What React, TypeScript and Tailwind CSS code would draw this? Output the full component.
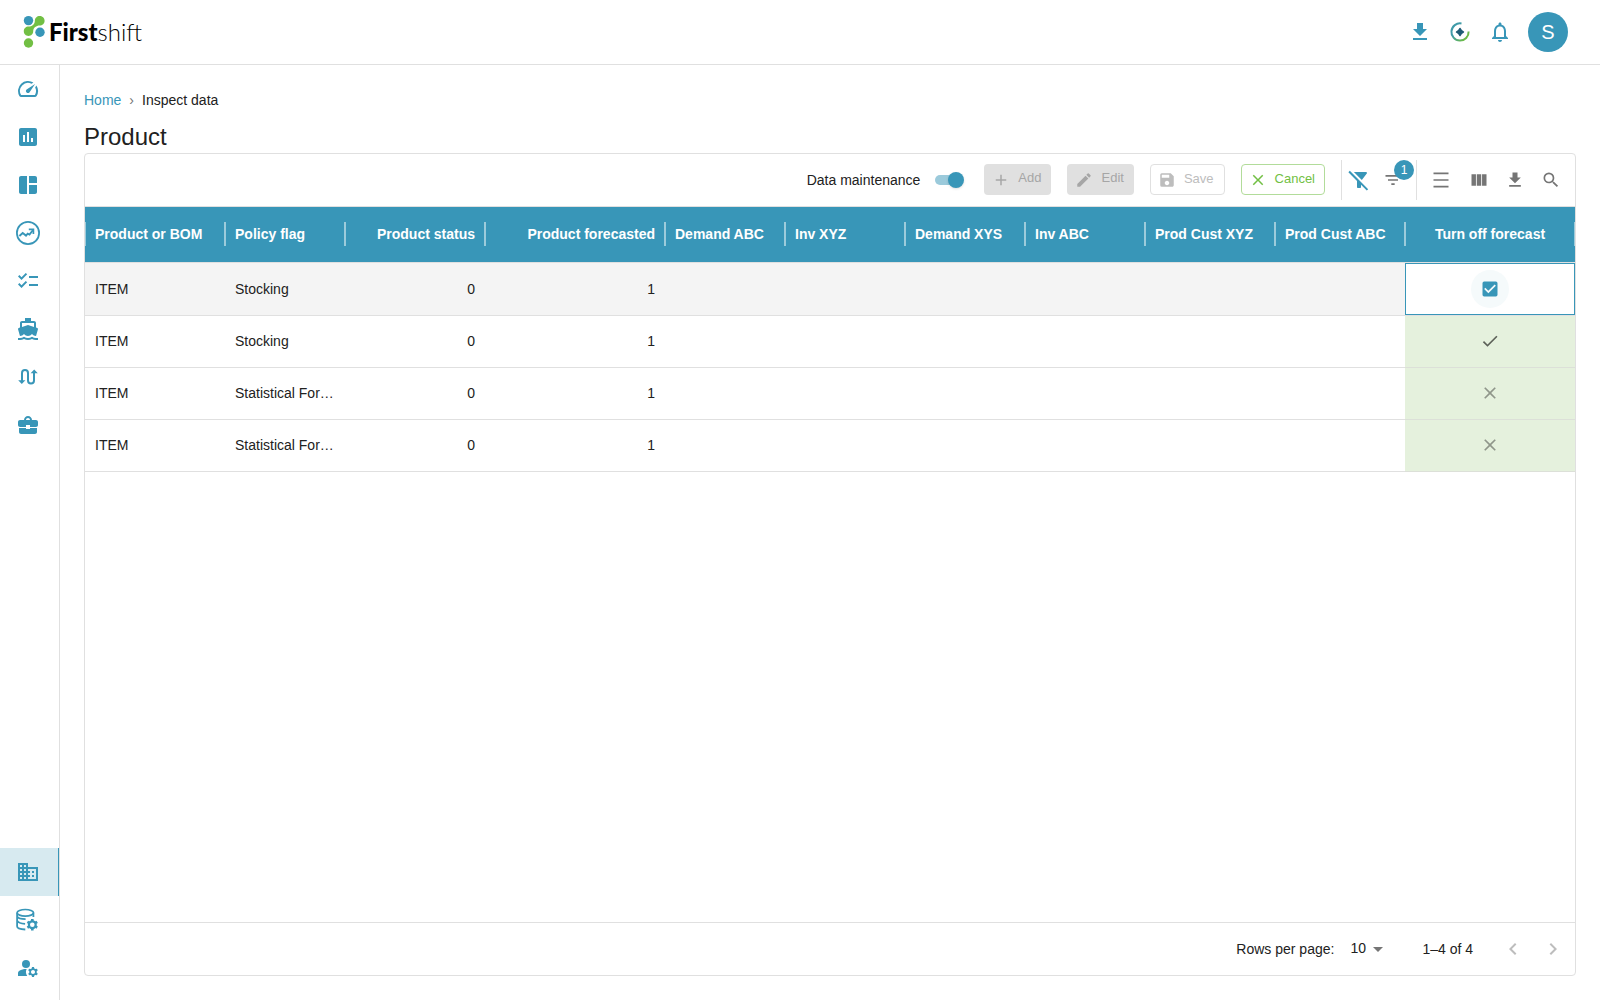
import React, { useState } from "react";
import {
  MdAdd,
  MdArrowDropDown,
  MdAssessment,
  MdCheck,
  MdCheckBox,
  MdCheckBoxOutlineBlank,
  MdChecklist,
  MdChevronLeft,
  MdChevronRight,
  MdClose,
  MdDensityMedium,
  MdDirectionsBoatFilled,
  MdDomain,
  MdEdit,
  MdFileDownload,
  MdFilterAltOff,
  MdFilterList,
  MdManageAccounts,
  MdNotificationsNone,
  MdSave,
  MdSearch,
  MdSpaceDashboard,
  MdSpeed,
  MdViewColumn,
} from "react-icons/md";

function LogoMark() {
  return (
    <svg width="22" height="34" viewBox="0 0 22 34" aria-hidden="true">
      <path
        d="M16.7 1C20 1 21.6 3.6 21.6 5.8c0 2.8-2.2 4.8-5 4.8-3.2 0-6.4 2.2-6.4 5.7 0 2.6-2 4.7-4.7 4.7S.8 18.900.8 16.300s2-4.700 4.700-4.700c3.500 0 6.300-2.400 6.300-5.600C11.800 3 14 1 16.700 1z"
        fill="#72bf44"
      />
      <circle cx="5.500" cy="5.600" r="4.700" fill="#3896b8" />
      <circle cx="17" cy="17.200" r="4.700" fill="#3896b8" />
      <circle cx="5.500" cy="28" r="4.700" fill="#72bf44" />
    </svg>
  );
}

function TrendIcon() {
  return (
    <svg width="24" height="24" viewBox="0 0 24 24" fill="none" stroke="currentColor" aria-hidden="true">
      <circle cx="12" cy="12" r="11.100" strokeWidth="1.800" />
      <path d="M3.400 15l3.300-3 3.300 2.600 1.700-2 1.800 1L17 9" strokeWidth="1.900" />
      <path d="M12.800 8.400h4.600v4.600" strokeWidth="1.700" />
    </svg>
  );
}

function RouteIcon() {
  return (
    <svg width="24" height="24" viewBox="0 0 24 24" fill="none" aria-hidden="true">
      <path d="M6 16V8a3 3 0 0 1 6 0v7.500a3 3 0 0 0 6 0V7" stroke="currentColor" strokeWidth="2" />
      <path d="M2.200 15.300h7.200L5.800 19zM14.600 8.300h7.200L18.200 4.500z" fill="currentColor" />
    </svg>
  );
}

function BriefcaseIcon() {
  return (
    <svg width="24" height="24" viewBox="0 0 24 24" fill="currentColor" aria-hidden="true">
      <path d="M10 16v-1H3v4c0 1.100.9 2 2 2h14c1.100 0 2-.9 2-2v-4h-7v1h-4z" />
      <path d="M20 7h-4c0-2.200-1.800-4-4-4S8 4.800 8 7H4c-1.100 0-2 .9-2 2v3c0 1.100.9 2 2 2h6v-2h4v2h6c1.100 0 2-.9 2-2V9c0-1.100-.9-2-2-2zM10 7c0-1.100.9-2 2-2s2 .9 2 2h-4z" />
    </svg>
  );
}

function DatabaseCogIcon() {
  return (
    <svg width="24" height="24" viewBox="0 0 24 24" fill="none" stroke="currentColor" aria-hidden="true">
      <ellipse cx="9.300" cy="4.800" rx="8.200" ry="3.300" strokeWidth="1.700" />
      <path
        d="M1.100 4.800v13.500c0 1.900 3.200 3 8.200 3.200M17.400 4.800v4.200M1.100 8.400c1 1.900 4 2.700 8.500 2.700M1.100 12.600c1 2 4 3 8 3.200"
        strokeWidth="1.800"
      />
      <circle cx="16.300" cy="16.700" r="3.400" strokeWidth="2.200" />
      <path
        d="M16.300 13.200v-2.200M16.300 20.200v2.200M19.300 14.950l1.900-1.100M13.300 18.450l-1.900 1.100M19.300 18.450l1.900 1.100M13.300 14.950l-1.900-1.100"
        strokeWidth="2.600"
      />
    </svg>
  );
}

function AssistantIcon() {
  return (
    <svg width="24" height="24" viewBox="0 0 24 24" fill="none" aria-hidden="true">
      <defs>
        <linearGradient id="ring" x1="3" y1="6" x2="20" y2="18" gradientUnits="userSpaceOnUse">
          <stop offset="0.300" stopColor="#3f9aa8" />
          <stop offset="0.900" stopColor="#6cbb47" />
        </linearGradient>
      </defs>
      <path d="M13.500 3.500A8.600 8.600 0 1 0 20.600 11.500" stroke="url(#ring)" strokeWidth="2" />
      <path
        d="M12 8.600c.8 2 1.400 2.600 3.400 3.400-2 .8-2.600 1.400-3.400 3.400-.8-2-1.400-2.600-3.400-3.400 2-.8 2.600-1.400 3.400-3.400z"
        fill="#1f5b75"
        stroke="#1f5b75"
        strokeWidth="1.600"
        strokeLinejoin="round"
      />
    </svg>
  );
}

const mainNav = [
  { label: "Dashboard", icon: <MdSpeed size={24} /> },
  { label: "Reports", icon: <MdAssessment size={24} /> },
  { label: "Workspace", icon: <MdSpaceDashboard size={24} /> },
  { label: "Forecast", icon: <TrendIcon /> },
  { label: "Tasks", icon: <MdChecklist size={24} /> },
  { label: "Supply", icon: <MdDirectionsBoatFilled size={24} /> },
  { label: "Flows", icon: <RouteIcon /> },
  { label: "Business", icon: <BriefcaseIcon /> },
];

const adminNav = [
  { label: "Inspect data", icon: <MdDomain size={24} />, active: true },
  { label: "Data settings", icon: <DatabaseCogIcon /> },
  { label: "User settings", icon: <MdManageAccounts size={24} /> },
];

function NavLink({ label, icon, active }: { label: string; icon: React.ReactNode; active?: boolean }) {
  return (
    <a
      href="#"
      aria-label={label}
      className={
        active
          ? "flex h-12 items-center border-r border-[#3896b8] bg-[#d7eaf0] pl-4 text-[#3896b8]"
          : "flex h-12 items-center pl-4 text-[#3896b8]"
      }
    >
      {icon}
    </a>
  );
}

const columns = [
  { name: "Product or BOM", col: "w-[140px]", align: "text-left" },
  { name: "Policy flag", col: "w-[120px]", align: "text-left" },
  { name: "Product status", col: "w-[140px]", align: "text-right" },
  { name: "Product forecasted", col: "w-[180px]", align: "text-right" },
  { name: "Demand ABC", col: "w-[120px]", align: "text-left" },
  { name: "Inv XYZ", col: "w-[120px]", align: "text-left" },
  { name: "Demand XYS", col: "w-[120px]", align: "text-left" },
  { name: "Inv ABC", col: "w-[120px]", align: "text-left" },
  { name: "Prod Cust XYZ", col: "w-[130px]", align: "text-left" },
  { name: "Prod Cust ABC", col: "w-[130px]", align: "text-left" },
  { name: "Turn off forecast", col: "w-[170px]", align: "text-center" },
];

const rows = [
  { cells: ["ITEM", "Stocking", "0", "1", "", "", "", "", "", ""], off: true, editing: true },
  { cells: ["ITEM", "Stocking", "0", "1", "", "", "", "", "", ""], off: true },
  { cells: ["ITEM", "Statistical For…", "0", "1", "", "", "", "", "", ""], off: false },
  { cells: ["ITEM", "Statistical For…", "0", "1", "", "", "", "", "", ""], off: false },
];

function EditCell() {
  const [checked, setChecked] = useState(true);
  return (
    <td className="border-b border-[#e0e0e0] bg-white p-0">
      <div className="flex h-[52px] items-center justify-center border border-[#3896b8]">
        <label className="flex size-[38px] cursor-pointer items-center justify-center rounded-full bg-[#f5fafb] text-[#3896b8]">
          <input
            type="checkbox"
            aria-label="Turn off forecast"
            checked={checked}
            onChange={(e) => setChecked(e.target.checked)}
            className="sr-only"
          />
          {checked ? <MdCheckBox size={20} /> : <MdCheckBoxOutlineBlank size={20} />}
        </label>
      </div>
    </td>
  );
}

function DataTable() {
  return (
    <table className="w-full table-fixed border-separate border-spacing-0 text-sm">
      <colgroup>
        {columns.map((c) => (
          <col key={c.name} className={c.col} />
        ))}
      </colgroup>
      <thead>
        <tr className="h-14 bg-[#3896b8] text-white">
          {columns.map((c, i) => (
            <th key={c.name} scope="col" className={`relative border-b border-[#e0e0e0] px-2.5 pt-0 pb-0.5 font-bold whitespace-nowrap ${c.align}`}>
              {i === 0 && <span className="absolute top-[15px] left-0 h-6 w-px bg-[#9ccbdb]" />}
              {c.name}
              <span
                className={
                  i === columns.length - 1
                    ? "absolute top-[15px] right-0 h-6 w-px bg-[#9ccbdb]"
                    : "absolute top-[15px] -right-px z-10 h-6 w-0.5 bg-[#9ccbdb]"
                }
              />
            </th>
          ))}
        </tr>
      </thead>
      <tbody>
        {rows.map((r, i) => (
          <tr key={i} className={r.editing ? "h-[53px] bg-[#f4f4f4]" : "h-[52px]"}>
            {r.cells.map((v, j) => (
              <td key={j} className={`border-b border-[#e0e0e0] px-2.5 pt-0 pb-px whitespace-nowrap ${columns[j].align}`}>
                {v}
              </td>
            ))}
            {r.editing ? (
              <EditCell />
            ) : (
              <td className="border-b border-[#dce0d8] bg-[#e5f1dd] p-0 pb-px">
                <div className="flex justify-center">
                  {r.off ? (
                    <MdCheck size={20} className="text-[#5c6158]" aria-label="yes" />
                  ) : (
                    <MdClose size={20} className="text-[#8f968a]" aria-label="no" />
                  )}
                </div>
              </td>
            )}
          </tr>
        ))}
      </tbody>
    </table>
  );
}

function ToolButton({ label, className, children }: { label: string; className: string; children: React.ReactNode }) {
  return (
    <button type="button" aria-label={label} className={`relative flex h-9 items-center justify-center ${className}`}>
      {children}
    </button>
  );
}

function Toolbar() {
  const [on, setOn] = useState(true);
  return (
    <div className="flex h-[53px] items-center justify-end border-b border-[#e0e0e0] pr-1.5">
      <label className="flex items-center gap-2">
        <span className="text-sm">Data maintenance</span>
        <span className="flex h-6 w-10 items-center px-[7px]">
          <input type="checkbox" role="switch" checked={on} onChange={(e) => setOn(e.target.checked)} className="sr-only" />
          <span className={on ? "flex h-2.5 w-full items-center justify-end rounded-full bg-[#9bcadb]" : "flex h-2.5 w-full items-center rounded-full bg-gray-300"}>
            <span className={on ? "-mr-[3px] size-4 rounded-full bg-[#3896b8] shadow" : "-ml-[3px] size-4 rounded-full bg-gray-50 shadow"} />
          </span>
        </span>
      </label>
      <div className="mx-4 mb-px flex items-center gap-4 text-[13px] leading-7">
        <button type="button" disabled className="flex h-[31px] items-start gap-2 rounded bg-[#e0e0e0] pr-2.5 pl-2 text-[#a6a6a6]">
          <MdAdd size={18} className="mt-[7px]" /> Add
        </button>
        <button type="button" disabled className="flex h-[31px] items-start gap-2 rounded bg-[#e0e0e0] pr-2.5 pl-2 text-[#a6a6a6]">
          <MdEdit size={18} className="mt-[7px]" /> Edit
        </button>
        <button type="button" disabled className="flex h-[31px] items-start gap-2 rounded border border-[#e0e0e0] pr-2.5 pl-[7px] text-[#bdbdbd]">
          <MdSave size={18} className="mt-1.5" /> Save
        </button>
        <button type="button" className="flex h-[31px] items-start gap-2 rounded border border-[#b2dc9a] pr-[9px] pl-[7px] text-[#72bf44]">
          <MdClose size={18} className="mt-1.5" /> Cancel
        </button>
      </div>
      <div className="flex h-10 items-center border-x border-[#e0e0e0] pr-1.5">
        <ToolButton label="Clear filters" className="w-[34px] text-[#3896b8]">
          <MdFilterAltOff size={24} />
        </ToolButton>
        <ToolButton label="Filters" className="w-[34px] text-[#757575]">
          <MdFilterList size={20} />
          <span className="absolute -top-0.5 -right-1 flex size-5 items-center justify-center rounded-full bg-[#3896b8] text-xs text-white">1</span>
        </ToolButton>
      </div>
      <div className="flex items-center pl-1 text-[#757575]">
        <ToolButton label="Density" className="w-10">
          <MdDensityMedium size={20} />
        </ToolButton>
        <ToolButton label="Columns" className="w-9">
          <MdViewColumn size={20} />
        </ToolButton>
        <ToolButton label="Export" className="w-9">
          <MdFileDownload size={20} />
        </ToolButton>
        <ToolButton label="Search" className="w-9">
          <MdSearch size={20} />
        </ToolButton>
      </div>
    </div>
  );
}

function TableFooter() {
  return (
    <div className="flex h-[53px] items-center justify-end border-t border-[#e0e0e0] pr-0.5 text-sm">
      <label htmlFor="rows-per-page">Rows per page:</label>
      <div className="relative ml-2 flex items-center">
        <select id="rows-per-page" className="w-12 appearance-none bg-transparent pb-0.5 pl-2" defaultValue="10">
          <option>10</option>
          <option>25</option>
          <option>50</option>
        </select>
        <MdArrowDropDown size={24} className="pointer-events-none absolute right-0 text-[#757575]" />
      </div>
      <span className="mr-5 ml-8">1–4 of 4</span>
      <button type="button" disabled aria-label="Previous page" className="flex size-10 items-center justify-center text-[#bdbdbd]">
        <MdChevronLeft size={24} />
      </button>
      <button type="button" disabled aria-label="Next page" className="flex size-10 items-center justify-center text-[#bdbdbd]">
        <MdChevronRight size={24} />
      </button>
    </div>
  );
}

export default function App() {
  return (
    <div className="flex min-h-screen flex-col bg-white font-['Liberation_Sans',Arial,sans-serif] text-[#212121]">
      <header className="flex h-[65px] items-center justify-between border-b border-[#e0e0e0] pr-8 pl-[23px]">
        <a href="#" aria-label="Firstshift" className="flex items-center gap-1 text-black">
          <LogoMark />
          <span className="font-[Lato,sans-serif] text-2xl font-light">
            <span className="font-black">First</span>shift
          </span>
        </a>
        <div className="flex items-center text-[#3896b8]">
          <button type="button" aria-label="Downloads" className="flex size-10 items-center justify-center">
            <MdFileDownload size={24} />
          </button>
          <button type="button" aria-label="Assistant" className="flex size-10 items-center justify-center">
            <AssistantIcon />
          </button>
          <button type="button" aria-label="Notifications" className="flex size-10 items-center justify-center">
            <MdNotificationsNone size={24} />
          </button>
          <button type="button" aria-label="Account" className="ml-2 flex size-10 items-center justify-center rounded-full bg-[#3896b8] text-xl text-white">
            S
          </button>
        </div>
      </header>
      <div className="flex grow">
        <nav className="flex w-[60px] shrink-0 flex-col justify-between border-r border-[#e0e0e0] pb-2">
          <div>
            {mainNav.map((n) => (
              <NavLink key={n.label} {...n} />
            ))}
          </div>
          <div>
            {adminNav.map((n) => (
              <NavLink key={n.label} {...n} />
            ))}
          </div>
        </nav>
        <main className="flex min-w-0 grow flex-col px-6 pt-[25px] pb-6">
          <nav aria-label="Breadcrumb" className="flex text-sm">
            <a href="#" className="text-[#3896b8]">Home</a>
            <span className="mx-2 text-[#757575]">›</span>
            <span>Inspect data</span>
          </nav>
          <h1 className="mt-[11px] text-2xl">Product</h1>
          <section className="flex grow flex-col rounded border border-[#e0e0e0]">
            <Toolbar />
            <div className="grow">
              <DataTable />
            </div>
            <TableFooter />
          </section>
        </main>
      </div>
    </div>
  );
}
